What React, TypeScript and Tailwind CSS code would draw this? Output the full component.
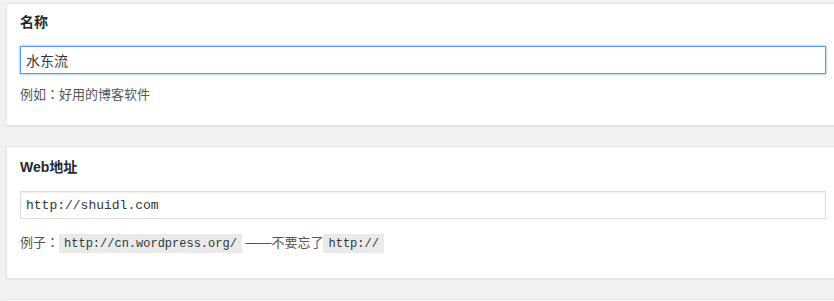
const sans = "font-['Liberation_Sans','Noto_Sans_CJK_SC',sans-serif]";
const mono = "font-['Liberation_Mono','Noto_Sans_CJK_SC',monospace]";

function Code({ children }: { children: string }) {
  return (
    <code className={`${mono} bg-[#eaeaea] text-[#32373c] text-[12px] px-[5px] pt-[3px] pb-[2px]`}>
      {children}
    </code>
  );
}

// full-width colon drawn centred, as in the reference
function Colon() {
  return <span className="font-['Noto_Sans_CJK_TC',sans-serif] leading-[0]">：</span>;
}

export default function App() {
  return (
    <div className={`${sans} h-[301px] bg-[#f1f1f1] pt-[3px] pl-[6px] overflow-hidden`}>
      {/* 名称 */}
      <section className="bg-white border border-[#e5e5e5] shadow-[0_1px_1px_rgba(0,0,0,0.04)] w-[900px] pl-[13px] pt-[8px] pb-[20px]">
        <h2 className="text-[14px] leading-[20px] font-bold text-[#23282d]">名称</h2>
        <input
          autoFocus
          defaultValue="水东流"
          className={`${sans} mt-[14px] block w-[806px] h-[28px] px-[5px] text-[14px] text-[#32373c] border border-[#5b9dd9] shadow-[0_0_2px_rgba(30,140,190,0.8)] outline-none`}
        />
        <p className="mt-[11px] text-[13px] leading-[20px] text-[#555]">
          例如<Colon />好用的博客软件
        </p>
      </section>

      {/* Web地址 */}
      <section className="mt-[20px] bg-white border border-[#e5e5e5] shadow-[0_1px_1px_rgba(0,0,0,0.04)] w-[900px] pl-[13px] pt-[10px] pb-[24px]">
        <h2 className="text-[14px] leading-[20px] font-bold text-[#23282d]">Web地址</h2>
        <input
          defaultValue="http://shuidl.com"
          className={`${mono} mt-[14px] block w-[806px] h-[28px] px-[5px] text-[13px] text-[#32373c] border border-[#ddd] shadow-[inset_0_1px_2px_rgba(0,0,0,0.07)] outline-none`}
        />
        <p className="mt-[14px] text-[13px] leading-[20px] text-[#555]">
          例子<Colon /><Code>http://cn.wordpress.org/</Code> ——不要忘了<Code>http://</Code>
        </p>
      </section>

      <section className="mt-[20px] bg-white border border-[#e5e5e5] w-[900px] h-[40px]" />
    </div>
  );
}
